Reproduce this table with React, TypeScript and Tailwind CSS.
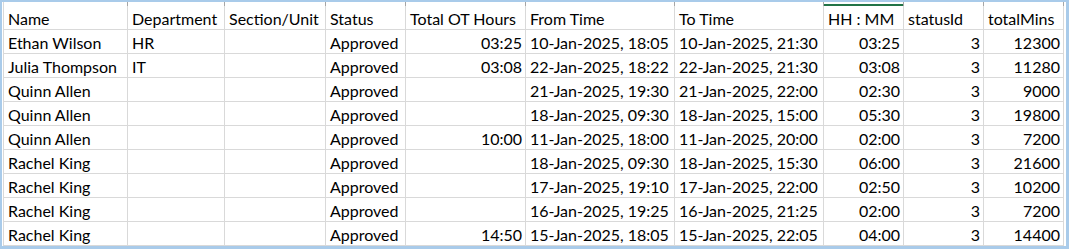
import clsx from 'clsx';

const cols = ['w-[124px]', 'w-[97px]', 'w-[101px]', 'w-[80px]', 'w-[120px]', 'w-[149px]', 'w-[149px]', 'w-[80px]', 'w-[80px]', 'w-[80px]'];
const rightCols = [4, 7, 8, 9];

const header = ['Name', 'Department', 'Section/Unit', 'Status', 'Total OT Hours', 'From Time', 'To Time', 'HH : MM', 'statusId', 'totalMins'];

const rows: string[][] = [
	['Ethan Wilson', 'HR', '', 'Approved', '03:25', '10-Jan-2025, 18:05', '10-Jan-2025, 21:30', '03:25', '3', '12300'],
	['Julia Thompson', 'IT', '', 'Approved', '03:08', '22-Jan-2025, 18:22', '22-Jan-2025, 21:30', '03:08', '3', '11280'],
	['Quinn Allen', '', '', 'Approved', '', '21-Jan-2025, 19:30', '21-Jan-2025, 22:00', '02:30', '3', '9000'],
	['Quinn Allen', '', '', 'Approved', '', '18-Jan-2025, 09:30', '18-Jan-2025, 15:00', '05:30', '3', '19800'],
	['Quinn Allen', '', '', 'Approved', '10:00', '11-Jan-2025, 18:00', '11-Jan-2025, 20:00', '02:00', '3', '7200'],
	['Rachel King', '', '', 'Approved', '', '18-Jan-2025, 09:30', '18-Jan-2025, 15:30', '06:00', '3', '21600'],
	['Rachel King', '', '', 'Approved', '', '17-Jan-2025, 19:10', '17-Jan-2025, 22:00', '02:50', '3', '10200'],
	['Rachel King', '', '', 'Approved', '', '16-Jan-2025, 19:25', '16-Jan-2025, 21:25', '02:00', '3', '7200'],
	['Rachel King', '', '', 'Approved', '14:50', '15-Jan-2025, 18:05', '15-Jan-2025, 22:05', '04:00', '3', '14400'],
];

const Cell = ({ text, col, right }: { text: string; col: number; right?: boolean }) => (
	<div
		className={clsx(
			'flex h-[24px] shrink-0 items-end overflow-hidden whitespace-nowrap border-r border-b border-[#d9d9d9] leading-[20px]',
			cols[col],
			right ? 'justify-end pr-[3px]' : 'pl-[4px]'
		)}
	>
		{text}
	</div>
);

export default function App() {
	return (
		<div className="h-[249px] w-[1069px] overflow-hidden bg-[#a9cbea] pt-[2px] pr-[3px] pb-[3px] pl-[2px]">
			<div className="h-full bg-white pl-[1px]">
				<div className="flex w-[1061px] border-l border-[#d9d9d9] font-['Lato',sans-serif] text-[16px] text-black">
					<div className="flex flex-col">
						{/* sliver of the column header strip */}
						<div className="flex h-[4px]">
							{cols.map((w, i) => (
								<div key={i} className={clsx('shrink-0 border-r border-[#a6a6a6]', w, i === 7 && 'flex flex-col justify-end')}>
									{i === 7 && <div className="h-[2px] bg-[#217346]" />}
								</div>
							))}
						</div>
						<div className="flex">
							{header.map((h, i) => (
								<Cell key={i} text={h} col={i} />
							))}
						</div>
						{rows.map((r, ri) => (
							<div key={ri} className="flex">
								{r.map((c, i) => (
									<Cell key={i} text={c} col={i} right={rightCols.includes(i)} />
								))}
							</div>
						))}
					</div>
				</div>
			</div>
		</div>
	);
}
